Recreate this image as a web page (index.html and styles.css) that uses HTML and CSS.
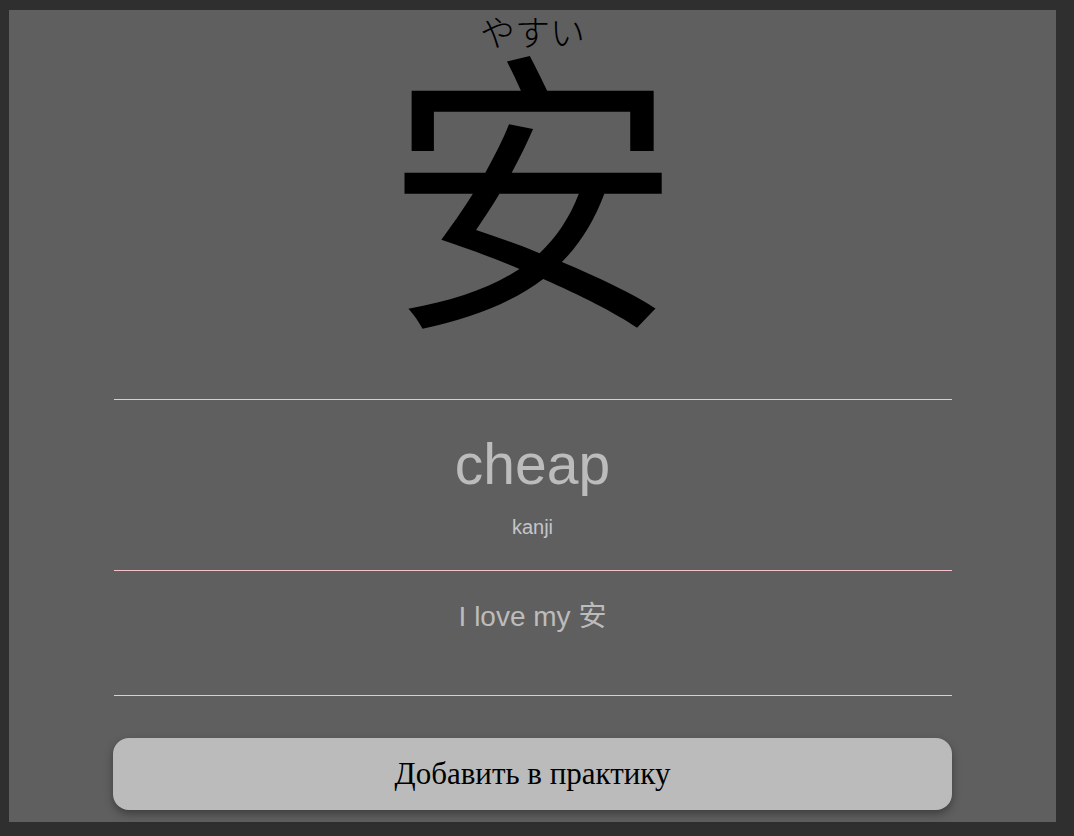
FILE: index.html
```html
<!DOCTYPE html>
<html lang="ru">
<head>
<meta charset="utf-8">
<link rel="stylesheet" href="styles.css">
</head>
<body>
<main class="card">
  <div class="kanji-block">
    <div class="reading" lang="zh-Hans">やすい</div>
    <div class="kanji" lang="zh-Hans">安</div>
  </div>
  <section class="meaning">
    <div class="word" lang="en">cheap</div>
    <div class="type" lang="en">kanji</div>
  </section>
  <section class="example">
    <div class="sentence" lang="zh-Hans">I love my 安</div>
  </section>
  <div class="actions">
    <button class="add-btn">Добавить в практику</button>
  </div>
</main>
</body>
</html>
```
FILE: styles.css
```css
html, body {
  margin: 0;
  padding: 0;
  background: #2f2f2f;
}
body {
  padding: 10px 18px 14px 9px;
  font-family: "Liberation Sans", Arial, sans-serif;
}
.card {
  background: #5f5f5f;
  height: 812px;
  box-sizing: border-box;
  display: flex;
  flex-direction: column;
  align-items: center;
}
.kanji-block {
  display: flex;
  flex-direction: column;
  align-items: center;
  height: 389px;
}
.reading {
  font-family: "Noto Sans CJK SC", sans-serif;
  font-weight: 300;
  font-size: 35px;
  line-height: 36px;
  color: #000;
  margin-top: 3px;
}
.kanji {
  font-family: "Noto Sans CJK SC", sans-serif;
  font-size: 297px;
  line-height: 250px;
  color: #000;
  margin-top: 3px;
}
.meaning, .example {
  width: 838px;
  border-top: 1px solid #f4c2cb;
  display: flex;
  flex-direction: column;
  align-items: center;
  color: #bcbcbc;
}
.meaning {
  height: 170px;
}
.word {
  font-size: 57px;
  line-height: 64px;
  margin-top: 32px;
}
.type {
  font-size: 20px;
  line-height: 24px;
  margin-top: 19px;
  color: #c4c6cb;
}
.example {
  height: 124px;
  border-bottom: 1px solid #f4c2cb;
}
.sentence {
  font-family: "Liberation Sans", "Noto Sans CJK SC", sans-serif;
  font-size: 28px;
  line-height: 32px;
  margin-top: 30px;
}
.actions {
  width: 839px;
  margin-top: 42px;
}
.add-btn {
  width: 100%;
  height: 72px;
  border: none;
  border-radius: 16px;
  background: #bbbbbb;
  box-shadow: 0 4px 8px rgba(0, 0, 0, 0.35);
  font-family: "Liberation Serif", "Times New Roman", serif;
  font-size: 31px;
  color: #000;
  cursor: pointer;
}
```
